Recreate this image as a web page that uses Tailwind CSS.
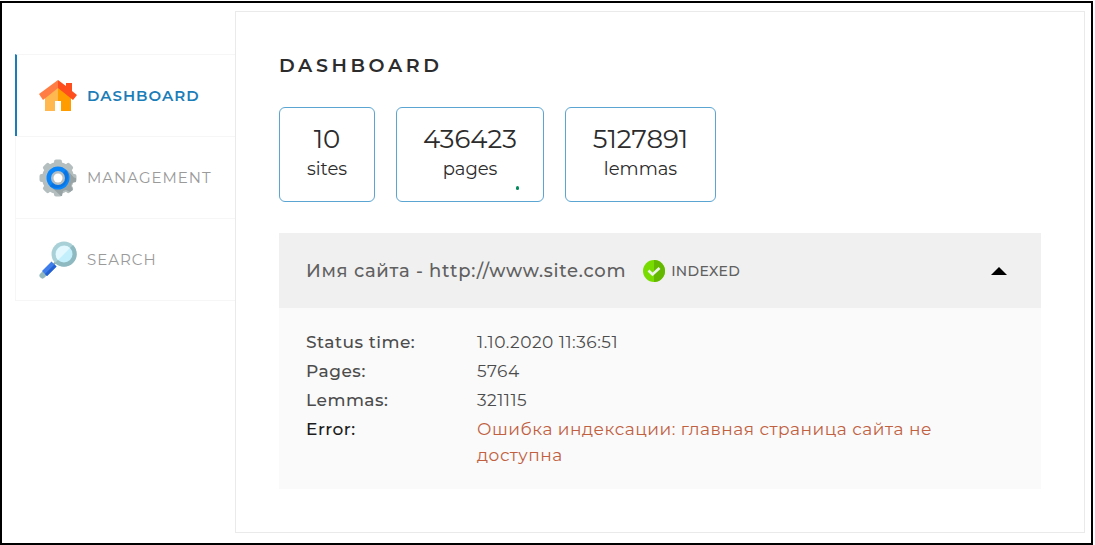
<!DOCTYPE html>
<html lang="ru">
<head>
<meta charset="utf-8">
<meta name="viewport" content="width=device-width, initial-scale=1">
<title>Dashboard</title>
<script src="https://cdn.jsdelivr.net/npm/@tailwindcss/browser@4"></script>
</head>
<body class="flex min-h-screen bg-white pt-px pr-0.5 font-['Montserrat','Inter',sans-serif] text-[#2c2c2c]">
<div class="flex flex-1 items-stretch border-2 border-black pt-2 pr-1.5 pb-2.5 pl-[13px]">
  <nav aria-label="Main" class="mt-[43px] w-[220px] shrink-0 text-[15px] leading-6 tracking-[1px] text-[#9a9a9a]">
    <ul>
      <li><a href="#dashboard" aria-current="page" class="flex h-[82px] items-center gap-2.5 border-t border-l-2 border-t-[#f6f6f6] border-l-[#1b7db8] pl-[22px] font-semibold text-[#1b7db8]">
        <svg class="size-[38px]" viewBox="0 0 38 38" aria-hidden="true">
          <path fill="#ffb74f" d="M6 17 19 8v26H6z"/>
          <path fill="#ff9d00" d="M19 8l13 9v17H19z"/>
          <path fill="#ff4e1d" d="M19 3l8 6V6h6v8l5 4-4 5L19 11z"/>
          <path fill="#ff7d42" d="M19 3v8L4 23 0 17z"/>
          <path fill="#fff" d="M16 24h6v10h-6z"/>
        </svg>DASHBOARD</a></li>
      <li><a href="#management" class="flex h-[82px] items-center gap-2.5 border-t border-l border-[#f6f6f6] pl-[23px]">
        <svg class="size-[38px]" viewBox="0 0 38 38" aria-hidden="true">
          <g fill="#b5bebf">
            <circle cx="19" cy="19" r="16"/>
            <rect id="tooth" x="15" y="0.500" width="8" height="37" rx="2"/>
            <use href="#tooth" transform="rotate(45 19 19)"/>
            <use href="#tooth" transform="rotate(90 19 19)"/>
            <use href="#tooth" transform="rotate(135 19 19)"/>
          </g>
          <path fill="#98a3a6" d="M28 11l7 7.500 2 .5v4l-4 1-1 3 2 4-3 2-4-2-3 1-1 5h-1L11 27z"/>
          <circle cx="19" cy="19" r="11.500" fill="#0a86fa"/>
          <path fill="#0a74e2" d="M27 11a11.500 11.500 0 0 1-16 16z"/>
          <circle cx="19" cy="19" r="7" fill="#b4bec2"/>
          <circle cx="19" cy="19" r="4.500" fill="#fff"/>
        </svg>MANAGEMENT</a></li>
      <li><a href="#search" class="flex h-[83px] items-center gap-2.5 border-y border-l border-[#f6f6f6] pl-[23px]">
        <svg class="size-[38px]" viewBox="0 0 38 38" aria-hidden="true">
          <path stroke="#8fa9ae" stroke-width="2" d="M13 25l5-5"/>
          <path stroke="#92b8bd" stroke-width="6" stroke-linecap="round" d="M3.500 34.500L8 30"/>
          <path stroke="#3f7eea" stroke-width="7" d="M5.500 32.500L15 23"/>
          <path stroke="#2360d2" stroke-width="3" d="M7 34L16.500 24.500"/>
          <circle cx="25" cy="13" r="12.500" fill="#a9d0d6"/>
          <path fill="#8fb9c0" d="M34 4a12.500 12.500 0 0 1-18 18z"/>
          <circle cx="25" cy="13" r="8.500" fill="#c3effd"/>
          <path fill="#e4f9ff" d="M19 19A8.500 8.500 0 0 1 31 7z"/>
        </svg>SEARCH</a></li>
    </ul>
  </nav>
  <main class="min-w-0 flex-1 border border-[#eaeaea] px-[43px] pt-10 pb-[42px]">
    <h1 class="text-[19px] leading-7 font-semibold tracking-[0.19em]">DASHBOARD</h1>
    <div class="mt-[27px] flex flex-wrap gap-[21px] text-center">
      <div class="h-[95px] w-24 rounded-md border border-[#5aa5d2] pt-[15px]">
        <div class="text-[26px] leading-8">10</div>
        <div class="text-lg leading-7">sites</div>
      </div>
      <div class="relative h-[95px] w-[148px] rounded-md border border-[#5aa5d2] pt-[15px]">
        <div class="text-[26px] leading-8">436423</div>
        <div class="text-lg leading-7">pages</div>
        <span class="absolute right-6 bottom-[11px] h-1 w-[3px] rounded-full bg-[#008a5c]"></span>
      </div>
      <div class="h-[95px] w-[151px] rounded-md border border-[#5aa5d2] pt-[15px]">
        <div class="text-[26px] leading-8">5127891</div>
        <div class="text-lg leading-7">lemmas</div>
      </div>
    </div>
    <section class="mt-[31px] bg-[#fafafa]">
      <button type="button" aria-expanded="true" aria-controls="site-details" class="flex h-[75px] w-full items-center bg-[#f0f0f0] pr-[34px] pl-[27px] text-left font-medium text-[#606060]">
        <span class="text-lg tracking-[0.04em]">Имя сайта - http://www.site.com</span>
        <svg class="ml-[17px] size-[22px]" viewBox="0 0 22 22" aria-hidden="true">
          <circle cx="11" cy="11" r="11" fill="#78dc00"/>
          <path fill="#64b900" d="M11 0a11 11 0 0 1 0 22z"/>
          <path fill="none" stroke="#eef5e8" stroke-width="2.600" d="M5.500 10.500l4 4L16.500 8"/>
        </svg>
        <span class="ml-1.5 text-sm tracking-wide">INDEXED</span>
        <svg class="ml-auto h-2 w-4" viewBox="0 0 16 8" aria-hidden="true"><path fill="#000" d="M8 0l8 8H0z"/></svg>
      </button>
      <dl id="site-details" class="grid grid-cols-[171px_1fr] gap-y-[3px] pt-[21px] pr-[90px] pb-[21px] pl-[27px] text-[17px] leading-[26px] tracking-[0.03em] text-[#4c4c4c]">
        <dt class="font-medium">Status time:</dt><dd>1.10.2020 11:36:51</dd>
        <dt class="font-medium">Pages:</dt><dd>5764</dd>
        <dt class="font-medium">Lemmas:</dt><dd>321115</dd>
        <dt class="font-medium text-[#1c1c1c]">Error:</dt><dd class="text-[#c0603f]">Ошибка индексации: главная страница сайта не доступна</dd>
      </dl>
    </section>
  </main>
</div>
</body>
</html>
